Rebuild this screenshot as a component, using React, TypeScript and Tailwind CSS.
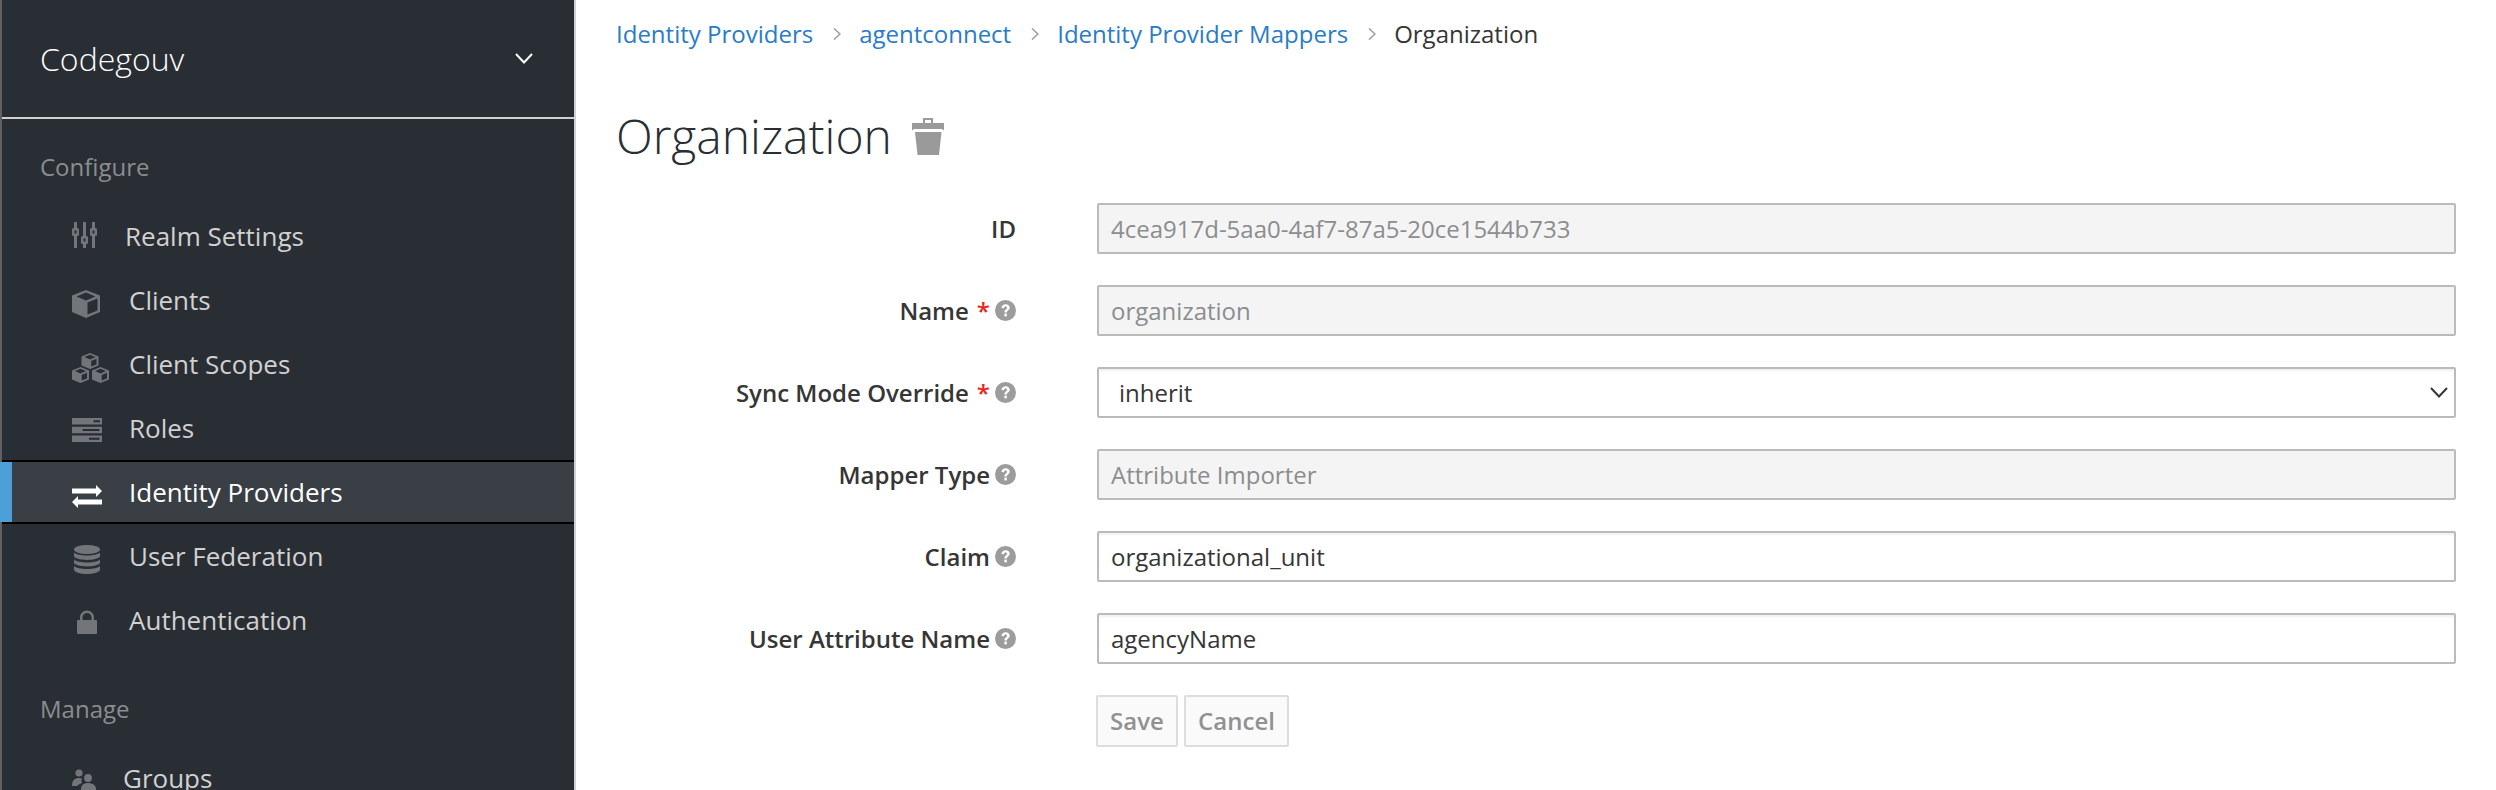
const font = "font-['Open_Sans','Noto_Sans',sans-serif]";

function Sliders() {
  return (
    <svg width="25" height="26" viewBox="0 0 25 26" fill="#72767b">
      <rect x="2" y="0" width="3" height="26" />
      <rect x="0" y="6" width="7" height="8" rx="1.500" />
      <rect x="2.500" y="8.500" width="2" height="3" fill="#292e34" />
      <rect x="11" y="0" width="3" height="26" />
      <rect x="9" y="14" width="7" height="8" rx="1.500" />
      <rect x="11.500" y="16.500" width="2" height="3" fill="#292e34" />
      <rect x="20" y="0" width="3" height="26" />
      <rect x="18" y="6" width="7" height="8" rx="1.500" />
      <rect x="20.500" y="8.500" width="2" height="3" fill="#292e34" />
    </svg>
  );
}
function Cube() {
  return (
    <svg width="28" height="28" viewBox="0 0 28 28" fill="#72767b">
      <path d="M14 0 L28 5.500 V22 L14 28 L0 22 V5.500 Z M14 2.500 L4.500 6.500 L14 10.500 L23.500 6.500 Z M15.500 12.500 V24.500 L25.500 20.500 V8.500 Z" fillRule="evenodd" />
    </svg>
  );
}
function Cubes() {
  const one = "M8.500 0 L17 3.500 V12.500 L8.500 16 L0 12.500 V3.500 Z M8.500 1.800 L3 4 L8.500 6.400 L14 4 Z M9.700 8 V13.500 L15 11.400 V5.700 Z";
  return (
    <svg width="37" height="30" viewBox="0 0 37 30" fill="#72767b">
      <path transform="translate(9.500 0)" d={one} fillRule="evenodd" />
      <path transform="translate(0 14)" d={one} fillRule="evenodd" />
      <path transform="translate(20 14)" d={one} fillRule="evenodd" />
    </svg>
  );
}
function Server() {
  return (
    <svg width="30" height="24" viewBox="0 0 30 24" fill="#72767b">
      <path fillRule="evenodd" d="M0 0H30V6.500H0Z M21.500 2.200V4.300H28V2.200Z" />
      <path fillRule="evenodd" d="M0 8.800H30V15.300H0Z M10.500 11V13.100H27.500V11Z" />
      <path fillRule="evenodd" d="M0 17.500H30V24H0Z M17 19.700V21.800H27.500V19.700Z" />
    </svg>
  );
}
function Exchange() {
  return (
    <svg width="30" height="23" viewBox="0 0 30 23" fill="#fff">
      <path d="M0 3.500H24V0L30 6L24 12V8.500H0Z" />
      <path d="M30 14.500H6V11L0 17L6 23V19.500H30Z" />
    </svg>
  );
}
function Database() {
  return (
    <svg width="26" height="29" viewBox="0 0 26 29" fill="#72767b">
      <ellipse cx="13" cy="4.500" rx="13" ry="4.500" />
      <path d="M0 7.500 C3 11.500 23 11.500 26 7.500 V11.500 C23 16 3 16 0 11.500Z" />
      <path d="M0 14.500 C3 18.500 23 18.500 26 14.500 V18 C23 22.500 3 22.500 0 18Z" />
      <path d="M0 21 C3 25 23 25 26 21 V25 C23 30.300 3 30.300 0 25Z" />
    </svg>
  );
}
function Lock() {
  return (
    <svg width="20" height="24" viewBox="0 0 20 24" fill="#72767b">
      <path fillRule="evenodd" d="M3 10V7.500A7 7 0 0 1 17 7.500V10H19A1 1 0 0 1 20 11V23A1 1 0 0 1 19 24H1A1 1 0 0 1 0 23V11A1 1 0 0 1 1 10Z M5.500 10H14.500V7.500A4.500 4.500 0 0 0 5.500 7.500Z" />
    </svg>
  );
}
function Users() {
  return (
    <svg width="24" height="26" viewBox="0 0 24 26" fill="#72767b">
      <circle cx="7" cy="4" r="3.600" />
      <path d="M0 17 C0 11 3 9 7 9 L10 9.500 C9 11.500 9.500 13 10 14 C7.500 15 6 16 5 17Z" />
      <circle cx="16" cy="9" r="3.900" />
      <path d="M9 26 V20 C9 16 12 14 16 14 C20 14 24 16 24 20 V26Z" />
    </svg>
  );
}
function Trash() {
  return (
    <svg width="32" height="37" viewBox="0 0 32 37" fill="#9a9a9a">
      <path fillRule="evenodd" d="M11 0H21V5H32V12.500L30 11H2L0 12.500V5H11Z M13 2V5H19V2Z" />
      <path d="M3 14H29.500L27 37H5.500Z" />
    </svg>
  );
}
function Help() {
  return (
    <svg width="21" height="21" viewBox="0 0 20 20" className="shrink-0">
      <circle cx="10" cy="10" r="10" fill="#9c9c9c" />
      <path d="M6.100 7.600C6.300 5.300 8 4 10.100 4C12.400 4 14 5.400 14 7.300C14 9.800 11.300 9.700 11.300 12H8.900C8.900 8.800 11.400 9 11.400 7.500C11.400 6.800 10.900 6.300 10 6.300C9.200 6.300 8.700 6.900 8.600 7.800Z" fill="#fff" />
      <rect x="8.900" y="13" width="2.400" height="2.600" fill="#fff" />
    </svg>
  );
}
function Crumb() {
  return (
    <svg width="8" height="12" viewBox="0 0 8 12" fill="none" stroke="#9c9c9c" strokeWidth="1.500" className="mr-[18px] ml-[20px] shrink-0">
      <path d="M1 0.500 L7 6 L1 11.500" />
    </svg>
  );
}

function NavItem({ icon, label, iconW, offset = "", active = false }: { icon: React.ReactNode; label: string; iconW: string; offset?: string; active?: boolean }) {
  return (
    <div className={`relative flex h-16 items-center pl-[70px] text-[26px] ${active ? "z-10 border-y-2 border-black bg-[#393f44] text-white" : "text-[#d1d1d1]"}`}>
      {active && <div className="absolute -left-[2px] top-0 bottom-0 w-3 bg-[#4d9fd8]" />}
      <div className={`flex shrink-0 justify-start ${iconW} ${offset}`}>{icon}</div>
      <span>{label}</span>
    </div>
  );
}

function Label({ text, required = false, help = true }: { text: string; required?: boolean; help?: boolean }) {
  return (
    <div className="flex w-[400px] shrink-0 items-center justify-end gap-[5px] text-[24px] font-semibold text-[#363636]">
      <span>
        {text}
        {required && <span className="ml-[8px] text-[#e8281e]">*</span>}
      </span>
      {help && <Help />}
    </div>
  );
}

function Field({ label, value, required, help, disabled }: { label: string; value: string; required?: boolean; help?: boolean; disabled?: boolean }) {
  return (
    <div className="flex h-[51px] items-center gap-[81px]">
      <Label text={label} required={required} help={help} />
      <div className={`flex h-[51px] w-[1359px] items-center rounded-[2px] border-2 border-[#bbbbbb] pl-[12px] text-[24px] ${disabled ? "bg-[#f4f4f4] text-[#8b8d8f]" : "bg-white text-[#363636] shadow-[inset_0_2px_2px_rgba(3,3,3,0.06)]"}`}>
        {value}
      </div>
    </div>
  );
}

export default function App() {
  return (
    <div className={`flex h-[790px] w-[2496px] overflow-hidden bg-white ${font}`}>
      <aside className="h-[790px] w-[576px] shrink-0 border-x-2 border-r-[#d1d1d1] border-l-[#5f6164] bg-[#292e34]">
        <div className="flex h-[119px] items-center justify-between border-b-2 border-[#d1d1d1] pr-[41px] pl-[38px] text-[32px] font-light text-white">
          <span>Codegouv</span>
          <svg width="18" height="11" viewBox="0 0 18 11" fill="none" stroke="#fff" strokeWidth="2"><path d="M1 1 L9 9.500 L17 1" /></svg>
        </div>
        <div className="mt-[31px] pl-[38px] text-[24px] leading-[34px] text-[#8b8d8f]">Configure</div>
        <div className="mt-[20px]">
          <NavItem icon={<Sliders />} label="Realm Settings" iconW="w-[53px]" offset="-translate-y-px" />
          <NavItem icon={<Cube />} label="Clients" iconW="w-[57px]" offset="translate-y-[4px]" />
          <NavItem icon={<Cubes />} label="Client Scopes" iconW="w-[57px]" offset="translate-y-[4px]" />
          <NavItem icon={<Server />} label="Roles" iconW="w-[57px]" offset="translate-y-[2px]" />
          <NavItem icon={<Exchange />} label="Identity Providers" iconW="w-[57px]" offset="translate-y-[4px]" active />
          <NavItem icon={<Database />} label="User Federation" iconW="w-[57px] pl-[2px]" offset="translate-y-[3px]" />
          <NavItem icon={<Lock />} label="Authentication" iconW="w-[57px] pl-[5px]" offset="translate-y-[2px]" />
        </div>
        <div className="mt-[40px] pl-[38px] text-[24px] leading-[34px] text-[#8b8d8f]">Manage</div>
        <div className="mt-[20px]">
          <NavItem icon={<Users />} label="Groups" iconW="w-[51px]" offset="translate-y-[4px]" />
        </div>
      </aside>
      <main className="min-w-0 flex-1 pl-[40px]">
        <nav className="flex h-[68px] items-center text-[24px] text-[#2a7cc7]">
          <span>Identity Providers</span>
          <Crumb />
          <span>agentconnect</span>
          <Crumb />
          <span>Identity Provider Mappers</span>
          <Crumb />
          <span className="text-[#363636]">Organization</span>
        </nav>
        <div className="mt-[29px] flex h-[78px] items-center gap-[20px]">
          <h1 className="text-[48px] font-light text-[#292e34]">Organization</h1>
          <Trash />
        </div>
        <form className="mt-[28px] flex flex-col gap-[31px]">
          <Field label="ID" value="4cea917d-5aa0-4af7-87a5-20ce1544b733" help={false} disabled />
          <Field label="Name" value="organization" required disabled />
          <div className="flex h-[51px] items-center gap-[81px]">
            <Label text="Sync Mode Override" required />
            <div className="flex h-[51px] w-[1359px] items-center justify-between rounded-[2px] border-2 border-[#bbbbbb] bg-white pr-[6px] pl-[20px] text-[24px] text-[#363636] shadow-[inset_0_2px_2px_rgba(3,3,3,0.06)]">
              <span>inherit</span>
              <svg width="18" height="11" viewBox="0 0 18 11" fill="none" stroke="#363636" strokeWidth="2"><path d="M1 1 L9 9.500 L17 1" /></svg>
            </div>
          </div>
          <Field label="Mapper Type" value="Attribute Importer" disabled />
          <Field label="Claim" value="organizational_unit" />
          <Field label="User Attribute Name" value="agencyName" />
          <div className="flex gap-[6px] pl-[480px]">
            <div className="flex h-[52px] w-[82px] items-center justify-center rounded-[2px] border-2 border-[#dddddd] bg-[#fafafa] text-[24px] font-semibold text-[#919191]">Save</div>
            <div className="flex h-[52px] w-[105px] items-center justify-center rounded-[2px] border-2 border-[#dddddd] bg-[#fafafa] text-[24px] font-semibold text-[#919191]">Cancel</div>
          </div>
        </form>
      </main>
    </div>
  );
}
